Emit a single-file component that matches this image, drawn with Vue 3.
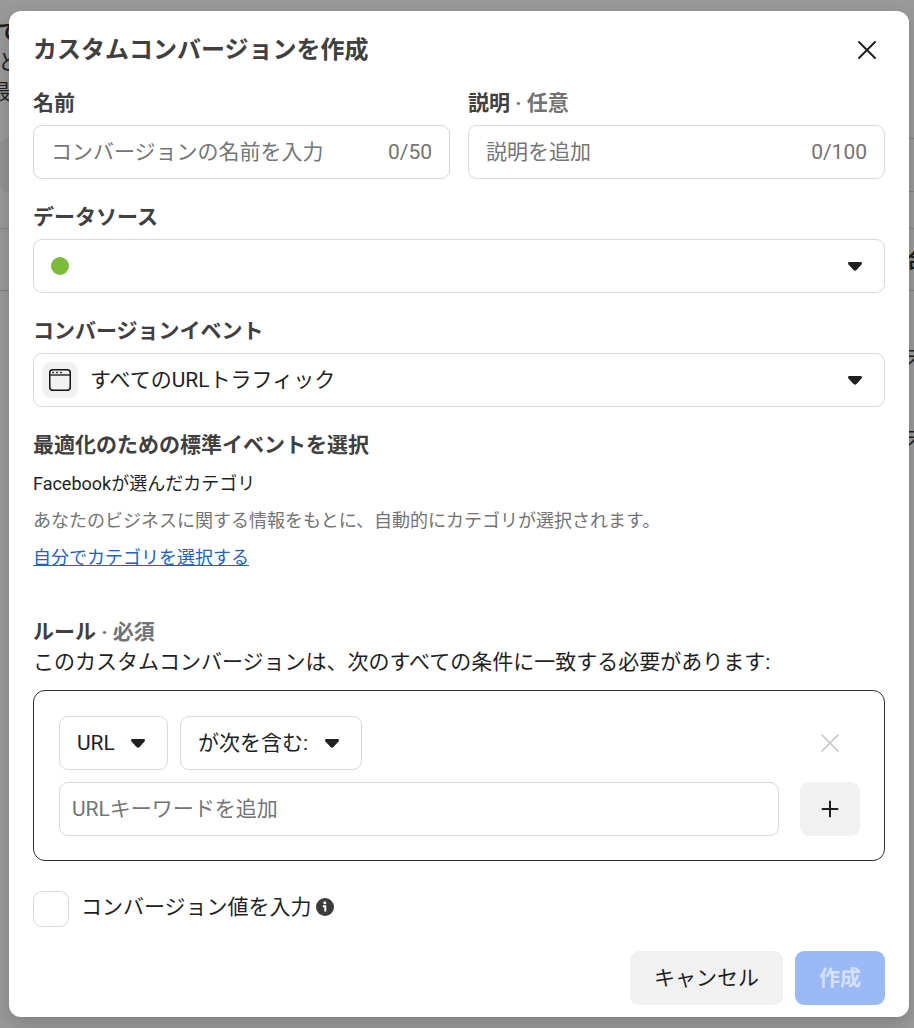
<script setup>
import { ref } from 'vue'

const name = ref('')
const description = ref('')
const keyword = ref('')
const useValue = ref(false)
</script>

<template>
  <div class="screen">
    <div class="page" aria-hidden="true">
      <div class="intro">
        <strong>て</strong>
        <span>と</span>
        <span>最</span>
      </div>
      <div class="toolbar"><span class="tab"></span><span class="search"></span></div>
      <div class="row head"><strong>合</strong></div>
      <div class="row"><span>未</span></div>
      <div class="row"><span>未</span></div>
    </div>

    <form class="modal" role="dialog" aria-labelledby="title" @submit.prevent>
      <header>
        <h1 id="title">カスタムコンバージョンを作成</h1>
        <button type="button" class="icon-btn close" aria-label="閉じる">
          <svg width="20" height="20" viewBox="0 0 20 20"><path d="M2 2 18 18M18 2 2 18" fill="none" stroke="#1f1f1f" stroke-width="2" stroke-linecap="round" /></svg>
        </button>
      </header>

      <div class="columns">
        <div class="group">
          <label class="label" for="name">名前</label>
          <div class="field">
            <input id="name" v-model="name" maxlength="50" placeholder="コンバージョンの名前を入力" />
            <span class="count">{{ name.length }}/50</span>
          </div>
        </div>
        <div class="group">
          <label class="label" for="description">説明<span class="hint"> · 任意</span></label>
          <div class="field">
            <input id="description" v-model="description" maxlength="100" placeholder="説明を追加" />
            <span class="count">{{ description.length }}/100</span>
          </div>
        </div>
      </div>

      <div class="group">
        <label class="label" for="source">データソース</label>
        <div class="field">
          <span class="dot"></span>
          <select id="source"><option></option></select>
          <svg class="arrow" width="14" height="9" viewBox="0 0 14 9"><path d="M1.5 0h11C14 0 14.4 1.5 13.500 2.500L8.500 8Q7 9.600 5.500 8L.5 2.500C-.4 1.500 0 0 1.500 0Z" /></svg>
        </div>
      </div>

      <div class="group">
        <label class="label" for="event">コンバージョンイベント</label>
        <div class="field">
          <span class="event-icon">
            <svg width="22" height="22" viewBox="0 0 22 22" fill="none" stroke="#111">
              <rect x=".75" y=".75" width="20.5" height="20.5" rx="3" stroke-width="1.5" />
              <path d="M1 6h20" stroke-width="1.300" />
              <path d="M3.200 3.500h1.600M7.200 3.500h1.600M11.200 3.500h1.600" stroke-width="1.600" />
            </svg>
          </span>
          <select id="event" class="event"><option>すべてのURLトラフィック</option></select>
          <svg class="arrow" width="14" height="9" viewBox="0 0 14 9"><path d="M1.5 0h11C14 0 14.4 1.5 13.500 2.500L8.500 8Q7 9.600 5.500 8L.5 2.500C-.4 1.500 0 0 1.500 0Z" /></svg>
        </div>
      </div>

      <section class="category">
        <h2 class="label">最適化のための標準イベントを選択</h2>
        <p>Facebookが選んだカテゴリ</p>
        <p class="note">あなたのビジネスに関する情報をもとに、自動的にカテゴリが選択されます。</p>
        <p><a href="#">自分でカテゴリを選択する</a></p>
      </section>

      <section class="rules">
        <h2 class="label">ルール<span class="hint"> · 必須</span></h2>
        <p>このカスタムコンバージョンは、次のすべての条件に一致する必要があります:</p>
        <div class="rule-box">
          <div class="conditions">
            <div class="field">
              <select class="compact" aria-label="対象"><option>URL</option></select>
              <svg class="arrow" width="14" height="9" viewBox="0 0 14 9"><path d="M1.5 0h11C14 0 14.4 1.5 13.500 2.500L8.500 8Q7 9.600 5.500 8L.5 2.500C-.4 1.500 0 0 1.500 0Z" /></svg>
            </div>
            <div class="field">
              <select class="compact" aria-label="条件"><option>が次を含む:</option></select>
              <svg class="arrow" width="14" height="9" viewBox="0 0 14 9"><path d="M1.5 0h11C14 0 14.4 1.5 13.500 2.500L8.500 8Q7 9.600 5.500 8L.5 2.500C-.4 1.500 0 0 1.500 0Z" /></svg>
            </div>
          </div>
          <button type="button" class="icon-btn" aria-label="条件を削除">
            <svg width="18" height="18" viewBox="0 0 18 18"><path d="M1 1 17 17M17 1 1 17" fill="none" stroke="#bfc2c7" stroke-width="1.500" stroke-linecap="round" /></svg>
          </button>
          <div class="field">
            <input v-model="keyword" class="keyword" aria-label="URLキーワード" placeholder="URLキーワードを追加" />
          </div>
          <button type="button" class="icon-btn add" aria-label="条件を追加">
            <svg width="18" height="18" viewBox="0 0 18 18"><path d="M9 1.500v15M1.500 9h15" fill="none" stroke="#1f1f1f" stroke-width="2" stroke-linecap="round" /></svg>
          </button>
        </div>
      </section>

      <div class="value">
        <input id="value" v-model="useValue" type="checkbox" />
        <div class="value-text">
          <label for="value">コンバージョン値を入力</label>
          <svg width="18" height="18" viewBox="0 0 18 18">
            <circle cx="9" cy="9" r="9" fill="#3b3b3b" />
            <circle cx="8.800" cy="4.800" r="1.500" fill="#fff" />
            <path d="M6.800 8.200h2.500v5.300" fill="none" stroke="#fff" stroke-width="2" />
          </svg>
        </div>
      </div>

      <footer>
        <button type="button" class="btn">キャンセル</button>
        <button type="submit" class="btn primary" disabled>作成</button>
      </footer>
    </form>
  </div>
</template>

<style>
body {
  margin: 0;
}
</style>

<style scoped>
* {
  box-sizing: border-box;
}
.screen {
  position: relative;
  display: flow-root;
  min-height: 100vh;
  background: #999;
  color: #1f1f1f;
  font: 21px/30px Roboto, "Noto Sans CJK JP", sans-serif;
}
.page {
  position: absolute;
  inset: 0;
  overflow: hidden;
}
.intro {
  display: flex;
  flex-direction: column;
  height: 138px;
  margin-left: -10px;
  padding-top: 17px;
}
.intro strong,
.intro span:first-of-type {
  margin-left: 8px;
}
.toolbar {
  display: flex;
  justify-content: space-between;
  height: 90px;
}
.tab,
.search {
  width: 50%;
  height: 54px;
}
.tab {
  border-radius: 9px;
  background: #919191;
}
.search {
  border: solid #828282;
  border-width: 1px 0;
}
.row {
  display: flex;
  align-items: center;
  justify-content: flex-end;
  height: 81px;
  padding-top: 50px;
}
.row.head {
  height: 63px;
  padding-top: 0;
  border: solid #828282;
  border-width: 1px 0;
}
.row span,
.row strong {
  margin-right: -13px;
}
h1,
h2,
p {
  margin: 0;
}
button,
input,
select {
  margin: 0;
  padding: 0;
  border: 0;
  background: none;
  color: inherit;
  font: inherit;
}
.modal {
  position: relative;
  margin: 11px 5px 11px 9px;
  padding: 22px 24px 12px;
  border-radius: 12px;
  background: #fff;
  box-shadow: 0 6px 18px rgba(0, 0, 0, 0.16);
}
header {
  display: flex;
  align-items: center;
  justify-content: space-between;
  margin-bottom: 22px;
}
h1 {
  color: #404040;
  font-size: 24px;
  line-height: 34px;
}
.icon-btn {
  display: flex;
  align-items: center;
  justify-content: center;
}
.close {
  width: 36px;
  height: 34px;
}
.columns {
  display: grid;
  grid-template-columns: 1fr 1fr;
  gap: 18px;
}
.group {
  margin-bottom: 24px;
}
.label {
  display: block;
  color: #404040;
  font-size: 21px;
  font-weight: 700;
  line-height: 28px;
}
.group .label {
  margin-bottom: 8px;
}
.hint {
  color: #737373;
}
.field {
  position: relative;
  display: flex;
  align-items: center;
  height: 54px;
  border: 1px solid #d8d8d8;
  border-radius: 9px;
  background: #fff;
}
.field input {
  flex: 1;
  min-width: 0;
  height: 100%;
  padding-left: 17px;
}
.field .keyword {
  padding-left: 12px;
}
.field input::placeholder {
  color: #757575;
  opacity: 1;
}
.count {
  padding-right: 17px;
  color: #737373;
}
.field select {
  flex: 1;
  height: 100%;
  appearance: none;
}
.field .event {
  padding-left: 12px;
}
.field .compact {
  padding: 0 52px 0 17px;
}
.arrow {
  position: absolute;
  right: 22px;
  fill: #1f1f1f;
  pointer-events: none;
}
.dot {
  width: 18px;
  height: 18px;
  margin-left: 17px;
  border-radius: 50%;
  background: #7dbb3b;
}
.event-icon {
  display: flex;
  align-items: center;
  justify-content: center;
  width: 36px;
  height: 36px;
  margin-left: 8px;
  border-radius: 9px;
  background: #f1f1f1;
}
.category {
  display: grid;
  gap: 12px;
  margin-bottom: 48px;
  font-size: 18px;
  line-height: 25px;
}
.note {
  color: #737373;
}
a {
  color: #2160c9;
  text-decoration: underline;
}
.rules p {
  line-height: 32px;
}
.rule-box {
  display: grid;
  grid-template-columns: 1fr 60px;
  gap: 12px 21px;
  margin-top: 12px;
  padding: 25px 24px 24px 25px;
  border: 1px solid #2c2c33;
  border-radius: 12px;
}
.conditions {
  display: flex;
  gap: 12px;
}
.add {
  border-radius: 9px;
  background: #f1f1f1;
}
.value {
  display: flex;
  align-items: flex-start;
  gap: 12px;
  margin: 30px 0 24px;
}
.value input {
  width: 36px;
  height: 36px;
  border: 1px solid #d8d8d8;
  border-radius: 9px;
  appearance: none;
}
.value input:checked {
  background: #2160c9;
}
.value-text {
  display: flex;
  align-items: center;
  gap: 4px;
  line-height: 32px;
}
footer {
  display: flex;
  justify-content: flex-end;
  gap: 12px;
}
.btn {
  height: 54px;
  padding: 0 24px;
  border-radius: 9px;
  background: #f1f1f1;
}
.primary {
  background: #9bb9f4;
  color: #d5e1fa;
  font-weight: 700;
}
</style>
